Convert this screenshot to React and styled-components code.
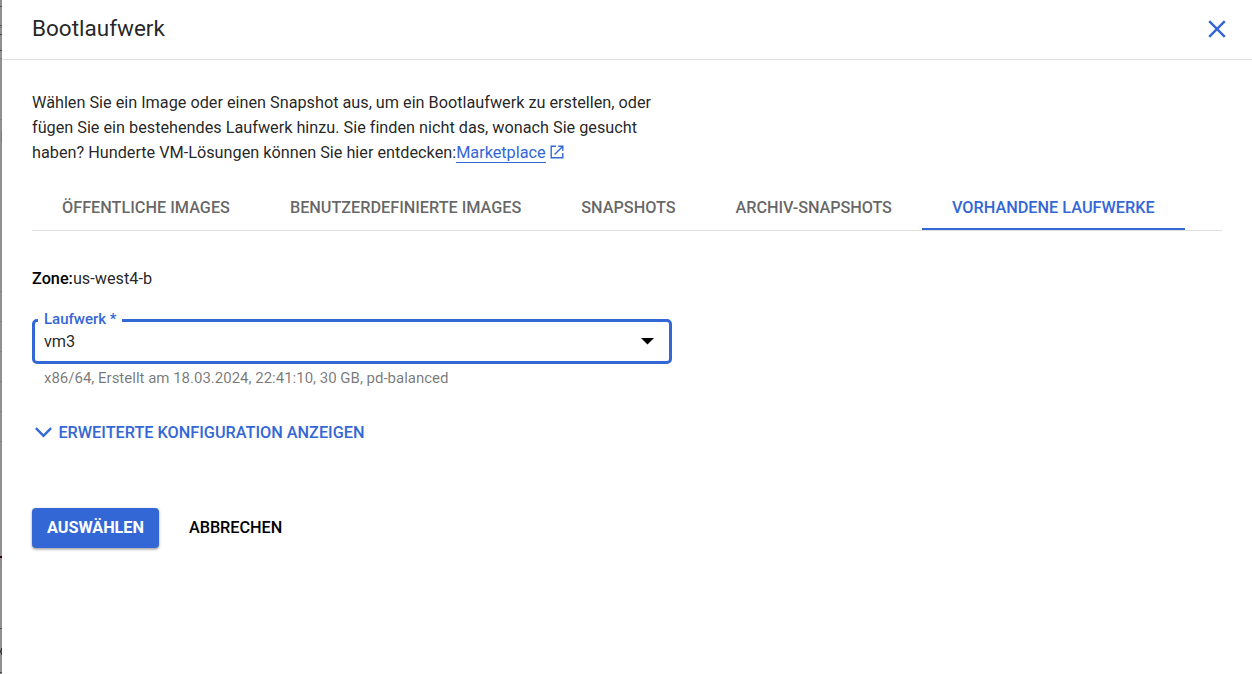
import React from "react";
import styled, { createGlobalStyle } from "styled-components";

const BLUE = "#3367d6";

const GlobalStyle = createGlobalStyle`
  *, *::before, *::after { box-sizing: border-box; }
  html, body { margin: 0; height: 100%; overflow: hidden; background: #fff; }
  body { font-family: Roboto, "Liberation Sans", sans-serif; font-size: 16.25px; color: rgba(0, 0, 0, 0.87); }
  button { font: inherit; border: 0; background: none; padding: 0; cursor: pointer; }
`;

const Screen = styled.div`
  display: flex;
  height: 100vh;
  overflow: hidden;
`;

/* Sliver of the dimmed page that stays visible beside the panel. */
const Backdrop = styled.div`
  position: relative;
  flex: 0 0 2px;
  background: #909090;
`;

const Mark = styled.span`
  position: absolute;
  right: 0;
  top: ${(p) => p.$top}px;
  width: ${(p) => p.$width || 2}px;
  height: ${(p) => p.$height || 1}px;
  background: ${(p) => p.$color || "#808080"};
`;

const Panel = styled.section`
  flex: 1;
  min-width: 0;
  display: flex;
  flex-direction: column;
  background: #fff;
`;

const Header = styled.header`
  display: flex;
  align-items: center;
  justify-content: space-between;
  height: 60px;
  padding: 0 26px 3px 30px;
  border-bottom: 1px solid #e0e0e0;
`;

const Title = styled.h1`
  margin: 0;
  font-size: 22.5px;
  line-height: 30px;
  font-weight: 400;
`;

const CloseButton = styled.button`
  display: flex;
  color: ${BLUE};
  margin-top: 2px;
`;

const Content = styled.div`
  padding: 30px 30px 0;
`;

const Intro = styled.p`
  margin: 0;
  width: 640px;
  line-height: 25px;
  letter-spacing: -0.01px;
  white-space: nowrap;
`;

const Link = styled.a`
  color: ${BLUE};
  border-bottom: 1px solid ${BLUE};
`;

const LinkIcon = styled.svg`
  margin-left: 4px;
  vertical-align: -1px;
  color: ${BLUE};
`;

const Tabs = styled.nav`
  display: flex;
  height: 46px;
  margin-top: 20px;
  border-bottom: 1px solid #e0e0e0;
  white-space: nowrap;
`;

const Tab = styled.button`
  padding: 1px 30px 0;
  border-bottom: 2px solid ${(p) => (p.$active ? BLUE : "transparent")};
  font-weight: 500;
  letter-spacing: ${(p) => p.$tracking}px;
  color: ${(p) => (p.$active ? BLUE : "rgba(0, 0, 0, 0.62)")};
`;

const Zone = styled.div`
  margin-top: 35px;
  line-height: 25px;

  b { font-weight: 500; color: #000; }
`;

const SelectField = styled.fieldset`
  display: flex;
  align-items: center;
  justify-content: space-between;
  position: relative;
  width: 640px;
  height: 45px;
  margin: 28px 0 0;
  padding: 0 15px 0 9px;
  border: 3px solid ${BLUE};
  border-radius: 5px;
`;

const FieldLabel = styled.span`
  position: absolute;
  left: 3px;
  top: -13px;
  padding: 0 5px 0 6px;
  background: #fff;
  font-size: 15px;
  line-height: 20px;
  font-weight: 500;
  color: ${BLUE};
`;

const Hint = styled.div`
  margin-top: 4px;
  padding-left: 12px;
  font-size: 15px;
  line-height: 20px;
  color: rgba(0, 0, 0, 0.54);
`;

const Expander = styled.button`
  display: flex;
  align-items: center;
  gap: 6.4px;
  margin-top: 32px;
  padding-left: 3px;
  line-height: 25px;
  font-weight: 500;
  color: ${BLUE};
`;

const Actions = styled.div`
  display: flex;
  margin-top: 63px;
  gap: 15px;
`;

const ActionButton = styled.button`
  height: 40px;
  padding: 0 15px 2px;
  border-radius: 4px;
  font-weight: ${(p) => (p.$primary ? 700 : 500)};
  letter-spacing: -0.03px;
  color: ${(p) => (p.$primary ? "#fff" : "#000")};
  background: ${(p) => (p.$primary ? BLUE : "transparent")};
  box-shadow: ${(p) => (p.$primary ? "0 1px 3px rgba(0,0,0,.3), 0 2px 2px rgba(0,0,0,.12)" : "none")};
`;

const marks = [
  { top: 6, color: "#505050" },
  { top: 25, color: "#555" },
  { top: 27, color: "#777" },
  { top: 34, color: "#404040" },
  { top: 50, color: "#484848" },
  { top: 58 },
  { top: 119 },
  { top: 131, height: 11, width: 1, color: "#917b5e" },
  { top: 291 },
  { top: 321 },
  { top: 351 },
  { top: 381 },
  { top: 411 },
  { top: 441 },
  { top: 556, height: 2, color: "#380006" },
  { top: 559, height: 10, width: 1, color: "#93906f" },
  { top: 628, color: "#555" },
  { top: 648, height: 7, width: 1, color: "#333" },
  { top: 650, height: 3, color: "#444" },
  { top: 672, color: "#444" },
];

const tabs = [
  { label: "ÖFFENTLICHE IMAGES", tracking: 0 },
  { label: "BENUTZERDEFINIERTE IMAGES", tracking: -0.02 },
  { label: "SNAPSHOTS", tracking: -0.02 },
  { label: "ARCHIV-SNAPSHOTS", tracking: -0.08 },
  { label: "VORHANDENE LAUFWERKE", tracking: 0.01, active: true },
];

export default function App() {
  return (
    <Screen>
      <GlobalStyle />
      <Backdrop>
        {marks.map((m) => (
          <Mark key={m.top} $top={m.top} $height={m.height} $width={m.width} $color={m.color} />
        ))}
      </Backdrop>
      <Panel>
        <Header>
          <Title>Bootlaufwerk</Title>
          <CloseButton aria-label="Schließen">
            <svg width="18" height="18" viewBox="0 0 18 18" fill="none" stroke="currentColor" strokeWidth="2.4">
              <path d="M1.2 1.2 16.8 16.8M16.8 1.2 1.2 16.8" />
            </svg>
          </CloseButton>
        </Header>
        <Content>
          <Intro>
            Wählen Sie ein Image oder einen Snapshot aus, um ein Bootlaufwerk zu erstellen, oder
            <br />
            fügen Sie ein bestehendes Laufwerk hinzu. Sie finden nicht das, wonach Sie gesucht
            <br />
            haben? Hunderte VM-Lösungen können Sie hier entdecken:
            <Link>Marketplace</Link>
            <LinkIcon width="14" height="14" viewBox="0 0 14 14" fill="none" stroke="currentColor" strokeWidth="1.4">
              <path d="M6 1.2H1.2v11.6h11.6V8M8.2 1.2h4.6v4.6M12.6 1.4 4.6 9.4" />
            </LinkIcon>
          </Intro>
          <Tabs>
            {tabs.map((t) => (
              <Tab key={t.label} $active={t.active} $tracking={t.tracking}>
                {t.label}
              </Tab>
            ))}
          </Tabs>
          <Zone>
            <b>Zone:</b>us-west4-b
          </Zone>
          <SelectField>
            <FieldLabel>Laufwerk *</FieldLabel>
            <span>vm3</span>
            <svg width="13" height="7" viewBox="0 0 13 7">
              <path d="M0 0h13L6.5 6.5z" fill="#000" />
            </svg>
          </SelectField>
          <Hint>x86/64, Erstellt am 18.03.2024, 22:41:10, 30 GB, pd-balanced</Hint>
          <Expander>
            <svg width="17" height="11" viewBox="0 0 17 11" fill="none" stroke="currentColor" strokeWidth="2.4">
              <path d="M.9 1.2 8.5 8.8 16.1 1.2" />
            </svg>
            ERWEITERTE KONFIGURATION ANZEIGEN
          </Expander>
          <Actions>
            <ActionButton $primary>AUSWÄHLEN</ActionButton>
            <ActionButton>ABBRECHEN</ActionButton>
          </Actions>
        </Content>
      </Panel>
    </Screen>
  );
}
